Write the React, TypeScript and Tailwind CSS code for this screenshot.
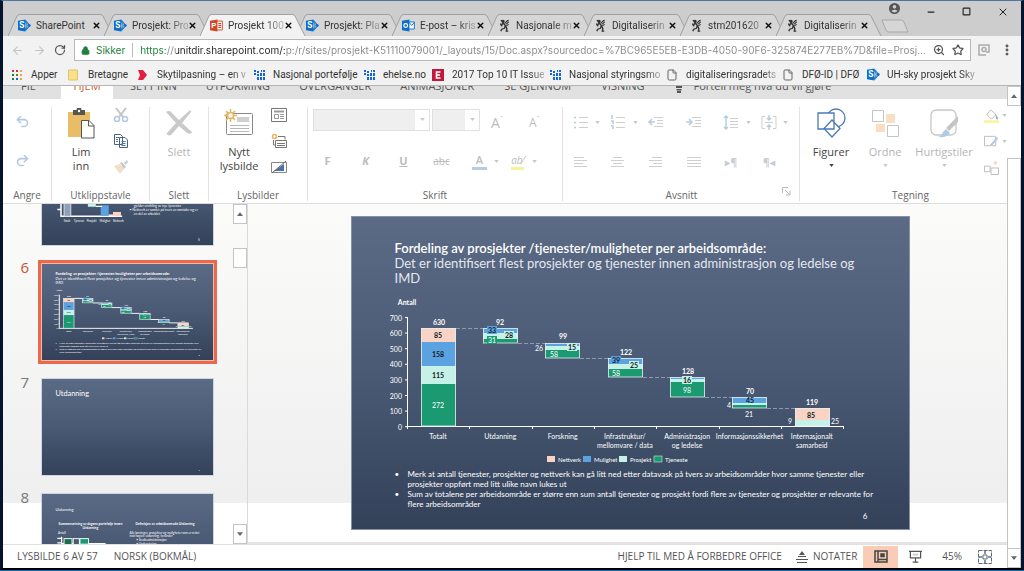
import type { ReactNode } from "react";
import { ArrowLeft, ArrowRight, RotateCw, Lock, ZoomIn, Star, EllipsisVertical, Undo2, Redo2, X, Minus, Square, File } from "lucide-react";

/* ---------- small drawings ---------- */

function SharePointIcon() {
  return (
    <svg viewBox="0 0 14 14" className="size-[13px] shrink-0">
      <path d="M7 2.5a5 5 0 0 1 0 9M8 1.5l4.8 5.5L8 12.5" fill="none" stroke="#2a83cf" strokeWidth="1.2" />
      <circle cx="12" cy="7" r="1.5" fill="#0b6fc7" />
      <path d="M0 2 8 .5v13L0 12z" fill="#0b6fc7" />
      <text x="4" y="10" fontSize="9" fontWeight="700" textAnchor="middle" fill="#fff">S</text>
    </svg>
  );
}

function PowerPointIcon() {
  return (
    <svg viewBox="0 0 14 14" className="size-[13px] shrink-0">
      <path d="M7 2.2h6.3v9.6H7z" fill="#fff" stroke="#d24726" />
      <path d="M9 5h3M9 7h3M9 9h3" stroke="#d24726" strokeWidth="1.2" />
      <path d="M0 2 8 .5v13L0 12z" fill="#d24726" />
      <text x="4.2" y="10" fontSize="8.5" fontWeight="700" textAnchor="middle" fill="#fff">P</text>
    </svg>
  );
}

function OutlookIcon() {
  return (
    <svg viewBox="0 0 14 14" className="size-[13px] shrink-0">
      <path d="M7 3.2h6.3v7.6H7z" fill="#fff" stroke="#0b6fc7" />
      <path d="m8 4 2.5 3L13 4" fill="none" stroke="#0b6fc7" />
      <path d="M0 2 8 .5v13L0 12z" fill="#0b6fc7" />
      <circle cx="4" cy="7" r="2" fill="none" stroke="#fff" strokeWidth="1.3" />
    </svg>
  );
}

function LionIcon() {
  return (
    <svg viewBox="0 0 14 14" className="size-[13px] shrink-0" fill="none" stroke="#333" strokeWidth="1.5">
      <path d="M3 1.5l2 1 .5 2L8 7l-1 3-3 1-1 2M8 7l1.5 3-.5 3h2M5.5 4.5 3 7M2.5 5l2 3" />
      <path d="M7 5l3-3 1.5-.5M9 5.5 11.5 3M9 7l2.5-1" strokeWidth="1.2" />
      <circle cx="5.5" cy="2.5" r="1" fill="#333" />
    </svg>
  );
}

function PersonIcon() {
  return (
    <svg viewBox="0 0 12 12" className="mt-[2px] size-[11px]">
      <circle cx="6" cy="6" r="6" fill="#555" />
      <circle cx="6" cy="4.2" r="2" fill="#cdcdcd" />
      <path d="M2.5 8.8Q6 5.8 9.5 8.8 6 12 2.5 8.8z" fill="#cdcdcd" />
    </svg>
  );
}

function DotsIcon() {
  return (
    <svg viewBox="0 0 12 12" className="size-3">
      {["#d93025", "#d93025", "#e8a33d", "#188038", "#5a7d2b", "#e8a33d", "#188038", "#1a63d8", "#e8a33d"].map((c, i) => (
        <rect key={i} x={1 + (i % 3) * 4} y={1 + Math.floor(i / 3) * 4} width="2" height="2" fill={c} />
      ))}
    </svg>
  );
}

function NoteIcon() {
  return (
    <svg viewBox="0 0 12 12" className="size-3">
      <path d="M.5 1h9v10h-9z" fill="#fbe08a" stroke="#e2c46a" />
    </svg>
  );
}

function RedArrowIcon() {
  return (
    <svg viewBox="0 0 12 12" className="size-3">
      <path d="M1 1h5l4 5-4 5H1l2-5z" fill="#e3203f" />
    </svg>
  );
}

function BlueGridIcon() {
  return (
    <svg viewBox="0 0 12 12" className="size-3" fill="#1466d8">
      <path d="M1 1h2v2H1zM4 2h2v2H4zM8 1h1v2H8zM10 1h2v2h-2zM1 4h2v2H1zM4 5h2v2H4zM7 4h2v3H7zM10 4h2v3h-2zM4 8h2v3H4zM7 8h2v3H7zM10 8h2v3h-2z" />
    </svg>
  );
}

function EIcon() {
  return (
    <svg viewBox="0 0 12 12" className="size-3">
      <rect width="12" height="12" fill="#c2183c" />
      <path d="M8.5 3h-4v6h4M4.5 6H8" fill="none" stroke="#fff" strokeWidth="1.6" />
    </svg>
  );
}

function Caret({ dark = false }: { dark?: boolean }) {
  return (
    <svg viewBox="0 0 6 4" className="h-[3px] w-[5px] shrink-0">
      <path d="M0 0h6L3 4z" fill={dark ? "#444" : "#c4c8cc"} />
    </svg>
  );
}

/* ---------- browser chrome ---------- */

const tabs: { title: string; icon: ReactNode; active?: boolean }[] = [
  { title: "SharePoint", icon: <SharePointIcon /> },
  { title: "Prosjekt: Pro", icon: <SharePointIcon /> },
  { title: "Prosjekt 100", icon: <PowerPointIcon />, active: true },
  { title: "Prosjekt: Pla", icon: <SharePointIcon /> },
  { title: "E-post – kris", icon: <OutlookIcon /> },
  { title: "Nasjonale m", icon: <LionIcon /> },
  { title: "Digitaliserin", icon: <LionIcon /> },
  { title: "stm201620", icon: <LionIcon /> },
  { title: "Digitaliserin", icon: <LionIcon /> },
];

function TabStrip() {
  return (
    <div className="flex h-[35px] shrink-0 items-end bg-[#cdcdcd] pl-[5px] font-[Roboto,'Open_Sans',sans-serif]">
      {tabs.map((t, i) => (
        <div key={i} className={t.active ? "relative z-10 h-[22px] w-24 shrink-0" : "relative h-[22px] w-24 shrink-0"}>
          <svg viewBox="0 0 106 22" className="absolute top-0 left-0 h-[22px] w-[106px]" aria-hidden="true">
            <path d="M0 22 9 2Q10 .5 12 .5H92Q94 .5 95 2L105 22" fill={t.active ? "#f2f2f2" : "#d6d6d6"} stroke="#a0a0a0" />
          </svg>
          <div className="relative flex h-full items-center pl-[10px]">
            {t.icon}
            <span className={`ml-[5px] w-[56px] text-left text-[10px] whitespace-nowrap text-[#333] ${i === 0 ? "" : "[mask-image:linear-gradient(to_right,black_65%,#0005_95%)]"}`}>
              {t.title}
            </span>
            <button aria-label="Lukk fane">
              <X className="size-[9px] text-[#111]" strokeWidth={4} />
            </button>
          </div>
        </div>
      ))}
      <button aria-label="Ny fane" className="-mr-6 mb-[3px] ml-[9px] shrink-0">
        <svg viewBox="0 0 28 14" className="h-[14px] w-[28px]">
          <path d="M1 1h19q2 0 3 2l4 10H8q-2 0-3-2z" fill="#d6d6d6" stroke="#a8a8a8" />
        </svg>
      </button>
      <div className="ml-auto flex h-full shrink-0 items-start gap-[26px] pr-[12px] text-[#222]">
        <PersonIcon />
        <button aria-label="Minimer"><Minus className="mt-[6px] size-[10px]" strokeWidth={3} /></button>
        <button aria-label="Maksimer"><Square className="mt-[6px] size-[9px]" strokeWidth={3} /></button>
        <button aria-label="Lukk"><X className="mt-[5px] size-[12px]" strokeWidth={2} /></button>
      </div>
    </div>
  );
}

function AddressBar() {
  return (
    <div className="flex h-[28px] shrink-0 items-center bg-[#f2f2f2] pl-2 font-[Inter,'Open_Sans',sans-serif] text-[#555]">
      <button aria-label="Tilbake"><ArrowLeft className="size-[13px] text-[#c4c4c4]" strokeWidth={2} /></button>
      <button aria-label="Frem" className="ml-[9px]"><ArrowRight className="size-[13px] text-[#c4c4c4]" strokeWidth={2} /></button>
      <button aria-label="Last på nytt" className="ml-[8px]"><RotateCw className="size-[12px]" strokeWidth={2.5} /></button>
      <div className="ml-[8px] flex h-[22px] min-w-0 flex-1 items-center border border-[#b8b8b8] bg-white px-[6px] text-[10px]">
        <Lock className="size-[9px] fill-[#1c8139] text-[#1c8139]" strokeWidth={2.5} />
        <span className="ml-[6px] text-[#1c8139]">Sikker</span>
        <span className="ml-[7px] h-[14px] w-px bg-[#bbb]" />
        <input
          aria-label="Adresse"
          readOnly
          className="ml-[7px] min-w-0 flex-1 bg-[linear-gradient(to_right,#1c8139_26px,#888_26px,#888_36px,#222_36px,#222_146px,#888_146px)] bg-clip-text text-transparent outline-none"
          value="https://unitdir.sharepoint.com/:p:/r/sites/prosjekt-K51110079001/_layouts/15/Doc.aspx?sourcedoc=%7BC965E5EB-E3DB-4050-90F6-325874E277EB%7D&file=Prosj..."
        />
        <button aria-label="Zoom"><ZoomIn className="size-[12px]" strokeWidth={2.5} /></button>
        <button aria-label="Bokmerke" className="ml-[7px]"><Star className="size-[12px]" strokeWidth={2.5} /></button>
      </div>
      <svg viewBox="0 0 12 12" className="ml-[7px] size-3" fill="none" stroke="#aaa" strokeWidth="1.5">
        <path d="M8 11H1V1h10v7H8" />
        <circle cx="6" cy="5.5" r="2" />
      </svg>
      <button aria-label="Meny" className="mr-[7px] ml-[10px]"><EllipsisVertical className="size-[14px]" strokeWidth={3} /></button>
    </div>
  );
}

const docIcon = <File className="size-3 text-[#666]" strokeWidth={2} />;
const bookmarks: { title: string; icon: ReactNode; width: string; fade?: boolean }[] = [
  { title: "Apper", icon: <DotsIcon />, width: "w-[57px]" },
  { title: "Bretagne", icon: <NoteIcon />, width: "w-[69px]" },
  { title: "Skytilpasning – en v", icon: <RedArrowIcon />, width: "w-[116px]", fade: true },
  { title: "Nasjonal portefølje", icon: <BlueGridIcon />, width: "w-[110px]" },
  { title: "ehelse.no", icon: <BlueGridIcon />, width: "w-[69px]" },
  { title: "2017 Top 10 IT Issue", icon: <EIcon />, width: "w-[117px]", fade: true },
  { title: "Nasjonal styringsmo", icon: <BlueGridIcon />, width: "w-[117px]", fade: true },
  { title: "digitaliseringsradets", icon: docIcon, width: "w-[116px]", fade: true },
  { title: "DFØ-ID | DFØ", icon: docIcon, width: "w-[85px]" },
  { title: "UH-sky prosjekt Sky", icon: <SharePointIcon />, width: "w-[112px]", fade: true },
];

function Bookmarks() {
  return (
    <nav className="flex h-[22px] shrink-0 items-center overflow-hidden border-b border-[#b4b4b4] bg-[#f2f2f2] pl-2 font-[Roboto,'Open_Sans',sans-serif] text-[10px] text-[#333]">
      {bookmarks.map((b) => (
        <a key={b.title} href="#" className={`flex shrink-0 items-center gap-2 whitespace-nowrap ${b.width}`}>
          <span className="flex w-3 shrink-0 justify-center">{b.icon}</span>
          <span className={b.fade ? "[mask-image:linear-gradient(to_right,black_calc(100%-14px),#0005)]" : ""}>{b.title}</span>
        </a>
      ))}
    </nav>
  );
}

/* ---------- ribbon ---------- */

function RibbonTabs() {
  return (
    <div className="flex h-[13px] shrink-0 items-end overflow-hidden bg-[#e1e1e1] text-[11px] leading-[14px] whitespace-nowrap text-[#555]">
      <button className="w-[58px] pb-[6px] pl-[18px] text-left">FIL</button>
      <button className="w-[52px] bg-white pb-[6px] text-center text-[#d0583a]">HJEM</button>
      <button className="ml-[17px] pb-[6px]">SETT INN</button>
      <button className="ml-[29px] pb-[6px]">UTFORMING</button>
      <button className="ml-[29px] pb-[6px]">OVERGANGER</button>
      <button className="ml-[29px] pb-[6px]">ANIMASJONER</button>
      <button className="ml-[30px] pb-[6px]">SE GJENNOM</button>
      <button className="ml-[30px] pb-[6px]">VISNING</button>
      <button className="ml-[30px] flex items-end gap-[11px] pb-[6px]">
        <svg viewBox="0 0 8 12" className="h-3 w-2"><path d="M1 0h6v7H1zM1.500 8h5v1.500h-5zM2 10h4v2H2z" fill="#555" /></svg>
        Fortell meg hva du vil gjøre
      </button>
    </div>
  );
}

function Group({ label, width, children, launcher, last }: { label: string; width: string; children: ReactNode; launcher?: boolean; last?: boolean }) {
  return (
    <section className={`flex h-full flex-col ${width}`}>
      <div className={last ? "mt-2 flex h-[94px] flex-col" : "mt-2 flex h-[94px] flex-col border-r border-[#e2e2e2]"}>
        <div className="flex min-h-0 flex-1">{children}</div>
        <div className={`flex h-[12px] items-center justify-center text-[10px] text-[#666] ${last ? "pl-[10px]" : ""}`}>
          <span className={launcher ? "ml-auto pl-[18px]" : ""}>{label}</span>
          {launcher && (
            <svg viewBox="0 0 9 9" className="mr-[8px] mb-2 ml-auto size-[9px]" fill="none" stroke="#bbb"><path d="M.5 6V.5H6M3 3l5 5M8 4v4H4" /></svg>
          )}
        </div>
      </div>
    </section>
  );
}

function BigButton({ icon, lines, muted, caret, width }: { icon: ReactNode; lines: string[]; muted?: boolean; caret?: boolean; width: string }) {
  return (
    <button className={`flex flex-col items-center text-[11px] leading-[14px] ${muted ? "text-[#b4b4b4]" : "text-[#444]"} ${width}`}>
      <span className="mb-[6px] flex h-[32px] items-center">{icon}</span>
      {lines.map((l) => <span key={l}>{l}</span>)}
      {caret && <span className="mt-[5px]"><Caret dark={!muted} /></span>}
    </button>
  );
}

function Ico({ children, label, caret }: { children: ReactNode; label: string; caret?: boolean }) {
  return (
    <button aria-label={label} className="flex h-[20px] w-[38px] items-center gap-[7px] text-[#bdbdbd]">
      <span className="flex w-[15px] justify-center">{children}</span>
      {caret && <Caret />}
    </button>
  );
}

function Lines({ d, blue }: { d: string; blue?: string }) {
  return (
    <svg viewBox="0 0 16 15" className="h-[15px] w-4 shrink-0" fill="none">
      <path d={d} stroke="#cfcfcf" />
      {blue && <path d={blue} stroke="#b9cbe0" strokeWidth="1.5" />}
    </svg>
  );
}

function Ribbon() {
  return (
    <div className="flex h-[105px] shrink-0 overflow-hidden border-b border-[#dcdcdc] bg-white">
      <Group label="Angre" width="w-[49px] shrink-0">
        <div className="flex w-full flex-col items-center gap-[24px] pt-[7px] pr-[10px] text-[#b4c9e0]">
          <button aria-label="Angre"><Undo2 className="size-[15px]" strokeWidth={2.5} /></button>
          <button aria-label="Gjør om"><Redo2 className="size-[15px]" strokeWidth={2.5} /></button>
        </div>
      </Group>

      <Group label="Utklippstavle" width="w-[98px] shrink-0">
        <BigButton
          width="ml-[6px] w-[46px]"
          lines={["Lim", "inn"]}
          icon={
            <svg viewBox="0 0 28 31" className="h-[31px] w-7">
              <path d="M1 4h22v25H1z" fill="#e8bd66" />
              <path d="M6 2h3.5a2.5 2.5 0 0 1 5 0H18v5H6z" fill="#555" />
              <circle cx="12" cy="3" r="1.2" fill="#fff" />
              <path d="M14.5 12.5H22l5 5V30H14.5z" fill="#fff" stroke="#555" />
              <path d="M21.5 12.5V18H27" fill="none" stroke="#555" />
            </svg>
          }
        />
        <div className="ml-[9px] flex flex-col gap-[10px]">
          <button aria-label="Klipp ut">
            <svg viewBox="0 0 16 16" className="size-4" fill="none">
              <path d="M3 1l7 9M13 1 6 10" stroke="#c4c4c4" strokeWidth="2" />
              <circle cx="4" cy="12" r="2.5" stroke="#b4c9e0" strokeWidth="1.5" />
              <circle cx="12" cy="12" r="2.5" stroke="#b4c9e0" strokeWidth="1.5" />
            </svg>
          </button>
          <button aria-label="Kopier">
            <svg viewBox="0 0 16 16" className="size-4" fill="#fff" stroke="#4d5f7c">
              <path d="M1.5 1.5h6l2 2v8h-8zM6.5 4.5H12L14.5 7v7.5h-8z" />
              <path d="M3 4.5h3M3 6.5h2M3 8.5h2M8.5 8.5h4M8.5 10.5h4M8.5 12.5h4" stroke="#3f74b5" />
            </svg>
          </button>
          <button aria-label="Kopier format">
            <svg viewBox="0 0 16 16" className="size-4">
              <path d="m1 7 6-2 4 5-4 5z" fill="#f3e0c4" />
              <path d="m7 4 2-1 4 5-2 2zM11 4l3-3 1 2-2.5 3z" fill="#c9c9c9" />
            </svg>
          </button>
        </div>
      </Group>

      <Group label="Slett" width="w-[59px] shrink-0">
        <BigButton
          width="w-full"
          muted
          lines={["Slett"]}
          icon={
            <svg viewBox="0 0 28 26" className="h-[26px] w-7">
              <path d="M1 2c3-2 5-1 6 1l7 7 10-9c1-1 3 0 2 1L17 13l10 9c0 2-3 2-5 1l-8-7-8 9c-2 1-5 0-4-2l9-10z" fill="#cacaca" />
            </svg>
          }
        />
      </Group>

      <Group label="Lysbilder" width="w-[99px] shrink-0">
        <BigButton
          width="ml-[6px] w-[48px]"
          lines={["Nytt", "lysbilde"]}
          icon={
            <svg viewBox="0 0 30 28" className="h-7 w-[30px]">
              <rect x="2.5" y="4.5" width="26" height="21" rx="1" fill="#fff" stroke="#888" />
              <path d="M13 8h12v5H13z" fill="#d0d0d0" />
              <path d="M6 16.5h19M6 19.5h19M6 22.5h19" stroke="#b8b8b8" />
              <path d="M6.5 0v13M0 6.5h13M2 2l9 9M11 2l-9 9" stroke="#e8b45a" strokeWidth="1.5" />
              <circle cx="6.5" cy="6.5" r="3" fill="#fff" stroke="#e8b45a" strokeWidth="1.5" />
            </svg>
          }
        />
        <div className="ml-[8px] flex flex-col gap-[10px]">
          <button aria-label="Oppsett">
            <svg viewBox="0 0 16 16" className="size-4" fill="none" stroke="#777">
              <path d="M.5 1.5h15v13H.5z" />
              <path d="M3 4.5h10" strokeWidth="2" stroke="#999" />
              <path d="M3.5 7.5h4v4h-4zM9 7.500h4M9 9.500h4M9 11.500h4" stroke="#999" />
            </svg>
          </button>
          <button aria-label="Dupliser">
            <svg viewBox="0 0 16 16" className="size-4" fill="#fff" stroke="#777">
              <path d="M7 3.5h7v3M2.500 7v5h2" fill="none" />
              <path d="M4.5 7.5h11v7h-11zM6 10.5h8M6 12.5h8" />
              <circle cx="3.5" cy="3.5" r="2" stroke="#e8b45a" strokeWidth="1.5" />
            </svg>
          </button>
          <button aria-label="Skjul lysbilde">
            <svg viewBox="0 0 16 16" className="size-4">
              <path d="M.5 3.5h15v10H.5z" fill="#fff" stroke="#888" />
              <path d="M3 12 13 5v7z" fill="#4a72a8" />
              <path d="M1 14 15 2" stroke="#666" />
            </svg>
          </button>
        </div>
      </Group>

      <Group label="Skrift" width="w-[255px] shrink-0">
        <div className="w-full">
          <div className="flex items-center gap-[2px] pl-[5px]">
            <div className="flex h-[22px] w-[117px] items-center border border-[#e0e0e0] bg-white">
              <select aria-label="Skrifttype" className="h-full flex-1 appearance-none bg-[#efefef]" />
              <span className="flex w-[14px] justify-center"><Caret /></span>
            </div>
            <div className="flex h-[22px] w-[48px] items-center border border-[#e0e0e0] bg-white">
              <select aria-label="Skriftstørrelse" className="h-full w-[32px] appearance-none bg-[#efefef]" />
              <span className="flex w-[14px] justify-center"><Caret /></span>
            </div>
            <button className="ml-[9px] flex w-[36px] pt-[7px] text-[14px] leading-[18px] text-[#bdbdbd]">A<span className="text-[8px] leading-[8px]">ˆ</span></button>
            <button className="flex pt-[7px] text-[12px] leading-[18px] text-[#bdbdbd]">A<span className="text-[8px] leading-[8px]">ˇ</span></button>
          </div>
          <div className="mt-[19px] flex pl-[12px] text-[11px] leading-[20px]">
            <Ico label="Fet"><b>F</b></Ico>
            <Ico label="Kursiv"><b className="italic">K</b></Ico>
            <Ico label="Understrek"><b className="underline">U</b></Ico>
            <Ico label="Gjennomstreking"><span className="text-[10px] line-through">abc</span></Ico>
            <Ico label="Skriftfarge" caret><b className="border-b-[3px] border-[#b5cbe6] px-1 leading-[14px] font-semibold">A</b></Ico>
            <Ico label="Uthevingsfarge" caret><span className="border-b-[3px] border-[#f7f39a] text-[10px] leading-[14px] italic">ab⁄</span></Ico>
          </div>
        </div>
      </Group>

      <Group label="Avsnitt" width="w-[237px] shrink-0" launcher>
        <div className="flex w-full flex-col gap-[20px] pt-[5px] pl-[10px]">
          <div className="flex">
            <Ico label="Punktliste" caret><Lines d="M6 2.500h9M6 7.500h9M6 12.500h9" blue="M1 2.500h2M1 7.500h2M1 12.500h2" /></Ico>
            <Ico label="Nummerert liste" caret><Lines d="M6 2.500h9M6 7.500h9M6 12.500h9" blue="M2 0v4M1 6h2v3M1 11h2v3" /></Ico>
            <Ico label="Mindre innrykk"><Lines d="M6 2.500h9M9 5.500h6M9 8.500h6M6 11.500h9" blue="M7 7H1M4 4 1 7l3 3" /></Ico>
            <Ico label="Mer innrykk"><Lines d="M6 2.500h9M9 5.500h6M9 8.500h6M6 11.500h9" blue="M0 7h6M3 4l3 3-3 3" /></Ico>
            <Ico label="Linjeavstand" caret><Lines d="M7 3.500h8M7 6.500h8M7 9.500h8M7 12.500h8" blue="M3 1v13M1 3l2-2 2 2M1 12l2 2 2-2" /></Ico>
            <Ico label="Juster tekst" caret><Lines d="M4 1.500H1v12h3M12 1.500h3v12h-3M4 7.500h8" blue="M8 0v5M6 3l2 2 2-2M8 15v-5M6 12l2-2 2 2" /></Ico>
          </div>
          <div className="flex">
            <Ico label="Venstrejuster"><Lines d="M1 2.500h10M1 5.500h13M1 8.500h9M1 11.500h13" /></Ico>
            <Ico label="Midtstill"><Lines d="M3 2.500h9M1 5.500h13M3 8.500h9M1 11.500h13" /></Ico>
            <Ico label="Høyrejuster"><Lines d="M4 2.500h10M1 5.500h13M5 8.500h9M1 11.500h13" /></Ico>
            <Ico label="Blokkjuster"><Lines d="M1 2.500h14M1 5.500h14M1 8.500h14M1 11.500h14" /></Ico>
            <Ico label="Venstre mot høyre"><b className="text-[10px] whitespace-nowrap text-[#c6ccd6]">▸¶</b></Ico>
            <Ico label="Høyre mot venstre"><b className="text-[10px] whitespace-nowrap text-[#c6ccd6]">¶◂</b></Ico>
          </div>
        </div>
      </Group>

      <Group label="Tegning" width="min-w-0 flex-1 pl-1" last>
        <BigButton
          width="ml-[4px] w-[46px] shrink-0"
          lines={["Figurer"]}
          caret
          icon={
            <svg viewBox="0 0 29 30" className="h-[30px] w-[29px]" fill="#fff" stroke="#4a7ab8" strokeWidth="1.3">
              <circle cx="19" cy="10" r="9" />
              <path d="M1 5h16v16H1zM15 12l8 8.500-8 8.500-8-8.500z" />
            </svg>
          }
        />
        <BigButton
          width="ml-[8px] w-[46px] shrink-0"
          muted
          lines={["Ordne"]}
          caret
          icon={
            <svg viewBox="0 0 27 27" className="size-[27px]" strokeWidth="1">
              <path d="M14 4h9v9h-9zM4 14h9v8H4z" fill="#f6dfc3" />
              <path d="M.5 .5h11v11H.5zM15.500 15.500h11v11h-11z" fill="#fff" stroke="#c4c4c4" />
            </svg>
          }
        />
        <BigButton
          width="ml-[4px] w-[64px] shrink-0"
          muted
          lines={["Hurtigstiler"]}
          caret
          icon={
            <svg viewBox="0 0 29 29" className="size-[29px]">
              <rect x="1" y="1" width="25" height="25" rx="5" fill="#fff" stroke="#c8c8c8" strokeWidth="1.3" />
              <path d="M28 7v6l-9 9-3-3z" fill="#c4c4c4" />
              <path d="M8 28q4-1 5-5l3-3 4 4q-3 5-12 4z" fill="#aecae6" />
            </svg>
          }
        />
        <div className="ml-[8px] flex flex-col gap-[11px] pt-[1px]">
          <button aria-label="Figurfyll" className="flex items-center gap-[3px]">
            <svg viewBox="0 0 16 16" className="size-[15px]"><path d="m7 2 6 5-5 5-5-5z" fill="#fff" stroke="#bbb" /><path d="M12 6l3 4v2h-2z" fill="#9ab0cc" /><path d="M0 13h16v3H0z" fill="#f9f5a0" /></svg>
            <Caret />
          </button>
          <button aria-label="Figuromriss" className="flex items-center gap-[3px]">
            <svg viewBox="0 0 16 16" className="size-[15px]"><path d="M.5 2.500h12v10H.5z" fill="#fff" stroke="#bbb" /><path d="m6 12 8-9 1 2-6 7z" fill="#aecae6" /></svg>
            <Caret />
          </button>
          <button aria-label="Dupliser figur" className="flex items-center gap-[3px]">
            <svg viewBox="0 0 16 16" className="size-[15px]"><path d="M.5 6.500h6v6h-6zM7.500 8.500h8v7h-8z" fill="#fff" stroke="#bbb" /><circle cx="12" cy="3" r="2" fill="#f6dfc3" /></svg>
          </button>
        </div>
      </Group>
    </div>
  );
}

/* ---------- slide content ---------- */

const PEACH = "#f9d3c4";
const BLUE = "#5ba3e0";
const MINT = "#c6f1e6";
const GREEN = "#1b9a72";

const bars: { x: number; parts: [string, number, number][] }[] = [
  { x: 70, parts: [[PEACH, 32, 46], [BLUE, 46, 70], [MINT, 70, 88], [GREEN, 88, 130]] },
  { x: 132, parts: [[BLUE, 32, 37], [MINT, 37, 43], [GREEN, 43, 47]] },
  { x: 194, parts: [[BLUE, 47, 50], [MINT, 50, 54], [GREEN, 54, 62]] },
  { x: 257, parts: [[BLUE, 62, 68], [MINT, 68, 73], [GREEN, 73, 81]] },
  { x: 319, parts: [[BLUE, 81, 83], [MINT, 83, 86], [GREEN, 86, 101]] },
  { x: 381, parts: [[BLUE, 101, 107], [MINT, 107, 109], [GREEN, 109, 112]] },
  { x: 444, parts: [[PEACH, 112, 124], [MINT, 124, 130]] },
];

const connectors = [[105, 132, 32], [167, 194, 47], [229, 257, 62], [292, 319, 81], [354, 381, 101], [416, 444, 112]];

const DARK = "#141c28";
const labels: { x: number; y: number; t: string; c?: string; bg?: string; bold?: boolean }[] = [
  { x: 88, y: 26, t: "630", bold: true }, { x: 87, y: 39, t: "85", c: DARK }, { x: 87, y: 58, t: "158", c: DARK },
  { x: 87, y: 79, t: "115", c: DARK }, { x: 87, y: 109, t: "272" },
  { x: 149, y: 26, t: "92", bold: true }, { x: 141, y: 34, t: "33", c: DARK, bg: BLUE },
  { x: 158, y: 39, t: "28", c: DARK, bg: MINT }, { x: 141, y: 44, t: "31", bg: GREEN },
  { x: 212, y: 40, t: "99", bold: true }, { x: 188, y: 52, t: "26" }, { x: 221, y: 51, t: "15", c: DARK, bg: MINT }, { x: 203, y: 58, t: "58" },
  { x: 275, y: 56, t: "122", bold: true }, { x: 265, y: 64, t: "39", c: DARK, bg: BLUE },
  { x: 283, y: 69, t: "25", c: DARK, bg: MINT }, { x: 265, y: 77, t: "58" },
  { x: 337, y: 75, t: "128", bold: true }, { x: 336, y: 84, t: "16", c: DARK, bg: MINT }, { x: 336, y: 94, t: "98" },
  { x: 399, y: 95, t: "70", bold: true }, { x: 399, y: 104, t: "45", c: DARK }, { x: 378, y: 109, t: "4" }, { x: 398, y: 118, t: "21" },
  { x: 461, y: 106, t: "119", bold: true }, { x: 460, y: 119, t: "85", c: DARK }, { x: 439, y: 125, t: "9" }, { x: 484, y: 125, t: "25" },
];

const categories = [["Totalt"], ["Utdanning"], ["Forskning"], ["Infrastruktur/", "mellomvare / data"], ["Administrasjon", "og ledelse"], ["Informasjonssikkerhet"], ["Internasjonalt", "samarbeid"]];
const tickX = [56, 118, 181, 243, 305, 368, 430, 492];

function ChartMarks({ mini = false }: { mini?: boolean }) {
  return (
    <g fontSize="7" fill="#fff" textAnchor="middle">
      <text x="56" y="9" fontWeight="700">Antall</text>
      {[700, 600, 500, 400, 300, 200, 100, 0].map((v, i) => (
        <g key={v}>
          <text x="51" y={24.5 + i * 15.6} textAnchor="end">{v}</text>
          <path d={`M54 ${21.5 + i * 15.6}h2`} stroke="#fff" strokeWidth={mini ? 3 : 1} />
        </g>
      ))}
      <path d="M56.500 21v109.500H493" fill="none" stroke="#fff" strokeWidth={mini ? 3 : 1} />
      {tickX.map((x) => <path key={x} d={`M${x + 0.5} 130v3`} stroke="#fff" />)}
      {connectors.map(([a, b, y]) => (
        <path key={a} d={`M${a} ${y + 0.5}H${b}`} stroke={mini ? "#fff" : "#8d99ac"} strokeWidth={mini ? 3 : 1} strokeDasharray={mini ? undefined : "4 2"} />
      ))}
      {bars.map((b) => (
        <g key={b.x}>
          {b.parts.map(([c, y0, y1]) => <rect key={y0} x={b.x} y={y0} width="35" height={y1 - y0} fill={c} />)}
          <rect x={b.x + 0.5} y={b.parts[0][1] + 0.5} width="34" height={b.parts[b.parts.length - 1][2] - b.parts[0][1] - 0.5} fill="none" stroke="#e6eef2" strokeWidth={mini ? 2 : 0.8} />
        </g>
      ))}
      {labels.map((l, i) => (
        <g key={i}>
          {l.bg && <rect x={l.x - 5} y={l.y - 4} width="10" height="8" fill={l.bg} />}
          <text x={l.x} y={l.y + 2.5} fill={l.c ?? "#fff"} fontWeight={l.bold || l.c ? 700 : 400}>{l.t}</text>
        </g>
      ))}
      {categories.map((lines, i) =>
        lines.map((t, j) => <text key={t} x={87 + i * 62.3} y={143 + j * 9}>{t}</text>)
      )}
      <g fontSize="6" textAnchor="start">
        <rect x="196" y="160" width="8" height="6" fill={PEACH} /><text x="207" y="165.5">Nettverk</text>
        <rect x="232" y="160" width="8" height="6" fill={BLUE} /><text x="243" y="165.5">Mulighet</text>
        <rect x="268" y="160" width="8" height="6" fill={MINT} /><text x="279" y="165.5">Prosjekt</text>
        <rect x="303" y="160" width="8" height="6" fill={GREEN} stroke="#cfe9df" strokeWidth="0.6" /><text x="314" y="165.5">Tjeneste</text>
      </g>
    </g>
  );
}

const title = "Fordeling av prosjekter /tjenester/muligheter per arbeidsområde:";
const subtitle = ["Det er identifisert flest prosjekter og tjenester innen administrasjon og ledelse og", "IMD"];
const bullets = [
  ["Merk at antall tjenester, prosjekter og nettverk kan gå litt ned etter datavask på tvers av arbeidsområder hvor samme tjenester eller", "prosjekter oppført med litt ulike navn lukes ut"],
  ["Sum av totalene per arbeidsområde er større enn sum antall tjenester og prosjekt fordi flere av tjenester og prosjekter er relevante for", "flere arbeidsområder"],
];

const slideBg = "bg-[linear-gradient(#5b6a85,#4a5a74_50%,#334159)]";

function Slide() {
  return (
    <article className={`flex h-[314px] w-[559px] shrink-0 flex-col overflow-hidden border border-[#8791a3] font-[Lato,'Open_Sans',sans-serif] text-white ${slideBg}`}>
      <header className="pt-[24px] pl-[43px] text-[13px] leading-[15px] whitespace-nowrap">
        <h1 className="font-semibold">{title}</h1>
        {subtitle.map((s) => <p key={s} className="text-[#e4e8ef]">{s}</p>)}
      </header>
      <svg viewBox="0 0 559 170" className="mt-[10px] -ml-px h-[170px] w-[559px] shrink-0">
        <ChartMarks />
      </svg>
      <ul className="mt-[3px] pl-[43px] text-[8px] leading-[10px] whitespace-nowrap">
        {bullets.map((b) => (
          <li key={b[0]} className="flex">
            <span className="w-[13px]">•</span>
            <span>{b[0]}<br />{b[1]}</span>
          </li>
        ))}
      </ul>
      <p className="pr-[41px] text-right text-[8px] leading-[14px]">6</p>
    </article>
  );
}

/* ---------- thumbnails ---------- */

function Thumb({ n, selected, children }: { n: number; selected?: boolean; children: ReactNode }) {
  return (
    <li className="flex h-[115px] shrink-0 items-start">
      <span className={`-mt-[3px] w-[35px] pr-[9px] text-right text-[15px] leading-[14px] ${selected ? "text-[#c8532f]" : "text-[#777]"}`}>{n}</span>
      <button className={selected ? "-mt-[3px] border-[3px] border-[#e8694d] bg-[#f6b8a6] p-px" : "ml-[3px] border border-[#cfd6e2]"}>
        <svg viewBox="0 0 559 314" className={`h-[96px] w-[171px] font-[Lato,'Open_Sans',sans-serif] ${slideBg}`} fill="#fff">
          {children}
        </svg>
      </button>
    </li>
  );
}

function Thumbnails() {
  return (
    <aside className="flex w-[230px] shrink-0 flex-col overflow-hidden">
      <ol className="-mt-[56px] flex flex-col">
        <Thumb n={5}>
          <path d="M62 120v100h200M50 142h12M50 170h12M50 198h12" fill="none" stroke="#fff" strokeWidth="5" />
          <rect x="72" y="100" width="22" height="120" fill="#8fa0b8" stroke="#dfe5ee" strokeWidth="3" />
          <rect x="150" y="175" width="26" height="14" fill={MINT} />
          <rect x="192" y="184" width="26" height="34" fill={BLUE} />
          <path d="M176 188h20M218 216h14" stroke="#fff" strokeWidth="4" />
          <rect x="232" y="206" width="26" height="14" fill={PEACH} />
          <g fontSize="9">
            <text x="70" y="238">Totalt</text><text x="104" y="238">Tjeneste</text><text x="146" y="238">Prosjekt</text><text x="188" y="238">Mulighet</text><text x="232" y="238">Nettverk</text>
          </g>
          <g fontSize="11">
            <text x="300" y="178">tjenester og prosjekter i porteføljen som</text>
            <text x="300" y="190">gjelder utvikling av nye tjenester</text>
            <text x="286" y="204">• Nettverk er samlet på tvers av områder og er</text>
            <text x="300" y="216">en del av arbeidet</text>
            <text x="510" y="300">5</text>
          </g>
        </Thumb>
        <Thumb n={6} selected>
          <g fontSize="13">
            <text x="44" y="36" fontWeight="700">{title}</text>
            <text x="44" y="51">{subtitle[0]}</text>
            <text x="44" y="66">{subtitle[1]}</text>
          </g>
          <g transform="translate(0 80)"><ChartMarks mini /></g>
          <g fontSize="8">
            {bullets.flat().map((b, i) => <text key={b} x="57" y={261 + i * 10}>{b}</text>)}
            <text x="44" y="261">•</text><text x="44" y="281">•</text>
            <text x="512" y="302">6</text>
          </g>
        </Thumb>
        <Thumb n={7}>
          <text x="44" y="54" fontSize="24">Utdanning</text>
          <text x="512" y="302" fontSize="8">7</text>
        </Thumb>
        <Thumb n={8}>
          <text x="44" y="56" fontSize="13">Utdanning</text>
          <g fontSize="11" fontWeight="700" textAnchor="middle">
            <text x="158" y="101">Sammensetning av dagens portefølje innen</text>
            <text x="158" y="115">Utdanning</text>
            <text x="402" y="101">Definisjon av arbeidsområde Utdanning</text>
          </g>
          <g fontSize="10">
            <text x="286" y="130">Alle løsninger, prosjekter og muligheter som er rettet</text>
            <text x="286" y="142">mot høyere utdanning, herunder</text>
            <text x="308" y="155">• Studieadministrasjon</text>
            <text x="308" y="168">• Undervisning</text>
            <text x="52" y="132">Antall</text>
          </g>
          <path d="M64 140v60M50 145h14M50 160h14M64 162h144" stroke="#fff" strokeWidth="4" />
          <rect x="72" y="146" width="26" height="60" fill="#1b6b4e" stroke="#fff" strokeWidth="3" />
          <rect x="102" y="146" width="20" height="60" fill="#4a5a74" stroke="#fff" strokeWidth="3" />
          <rect x="124" y="146" width="28" height="18" fill={GREEN} stroke="#fff" strokeWidth="3" />
        </Thumb>
      </ol>
    </aside>
  );
}

function ScrollButton({ up, label }: { up?: boolean; label: string }) {
  return (
    <button aria-label={label} className="flex h-[20px] w-full shrink-0 items-center justify-center border border-[#c4c4c4] bg-white">
      <svg viewBox="0 0 8 5" className="h-1 w-[6px]"><path d={up ? "M0 5h8L4 0z" : "M0 0h8L4 5z"} fill="#666" /></svg>
    </button>
  );
}

/* ---------- status bar ---------- */

function StatusBar() {
  return (
    <footer className="flex h-6 shrink-0 items-center border-t border-[#e0e0e0] bg-white pl-[14px] text-[10px] whitespace-nowrap text-[#555]">
      <span>LYSBILDE 6 AV 57</span>
      <span className="ml-[16px]">NORSK (BOKMÅL)</span>
      <button className="ml-auto">HJELP TIL MED Å FORBEDRE OFFICE</button>
      <button className="ml-[14px] flex items-center gap-[5px]">
        <svg viewBox="0 0 12 12" className="size-3"><path d="M6 0l3 4H3z" fill="#555" /><path d="M2 5.500h8M0 8.500h12M1 11.500h10" stroke="#555" /></svg>
        NOTATER
      </button>
      <button aria-label="Normalvisning" className="ml-[6px] flex h-[22px] w-[35px] items-center justify-center bg-[#f8ccb5]">
        <svg viewBox="0 0 14 13" className="h-[13px] w-[14px]" fill="none" stroke="#444" strokeWidth="1.5"><path d="M1 1h12v11H1zM4 1v11M4 9.500h9" /><path d="M7 4h3v2.500H7z" fill="#444" /></svg>
      </button>
      <button aria-label="Lysbildefremvisning" className="ml-[11px]">
        <svg viewBox="0 0 14 14" className="size-[13px]" fill="none" stroke="#555" strokeWidth="1.3"><path d="M0 1.500h14M1.500 2v6.500h11V2M7 8.500V13M4 13h6" /><path d="M4 4h6v2H4z" fill="#ccc" stroke="none" /></svg>
      </button>
      <span className="ml-[20px]">45%</span>
      <button aria-label="Tilpass til vindu" className="mr-[15px] ml-[16px]">
        <svg viewBox="0 0 14 14" className="size-[14px]" fill="none" stroke="#666"><path d="M.5 .5h13v13H.5z" strokeDasharray="4 1" /><path d="M5 5h4v4H5z" /><path d="M7 1v3M7 10v3M1 7h3M10 7h3" stroke="#3f74b5" strokeWidth="1.5" /></svg>
      </button>
    </footer>
  );
}

export default function App() {
  return (
    <div className="h-screen bg-[#1569b0] pb-px">
      <div className="flex h-full flex-col overflow-hidden border-x-[3px] border-t border-b-2 border-x-[#03142b] border-t-[#4d76a3] border-b-black font-['Open_Sans','Noto_Sans',sans-serif]">
        <TabStrip />
        <AddressBar />
        <Bookmarks />
        <div className="flex min-h-0 flex-1">
          <main className="flex min-w-0 flex-1 flex-col">
            <RibbonTabs />
            <Ribbon />
            <div className="flex min-h-0 flex-1 bg-[linear-gradient(#fbfbfa,#efefef_299px,#fff_299px)]">
              <Thumbnails />
              <div className="flex w-[14px] shrink-0 flex-col">
                <ScrollButton up label="Rull opp" />
                <span className="mt-[24px] h-[20px] border border-[#c4c4c4] bg-white" />
                <span className="flex-1" />
                <ScrollButton label="Rull ned" />
              </div>
              <div className="flex min-w-0 flex-1 flex-col border-l border-[#dadada]">
                <div className="flex min-h-0 flex-1 justify-center overflow-hidden pt-3 pl-[5px]">
                  <Slide />
                </div>
                <div className="h-[2px] shrink-0 bg-[#e4e4e4]" />
              </div>
            </div>
            <StatusBar />
          </main>
          <div className="flex w-[14px] shrink-0 flex-col bg-white">
            <ScrollButton up label="Rull siden opp" />
            <span className="mt-[52px] flex-1 border border-b-0 border-[#c4c4c4]" />
            <ScrollButton label="Rull siden ned" />
          </div>
        </div>
      </div>
    </div>
  );
}
